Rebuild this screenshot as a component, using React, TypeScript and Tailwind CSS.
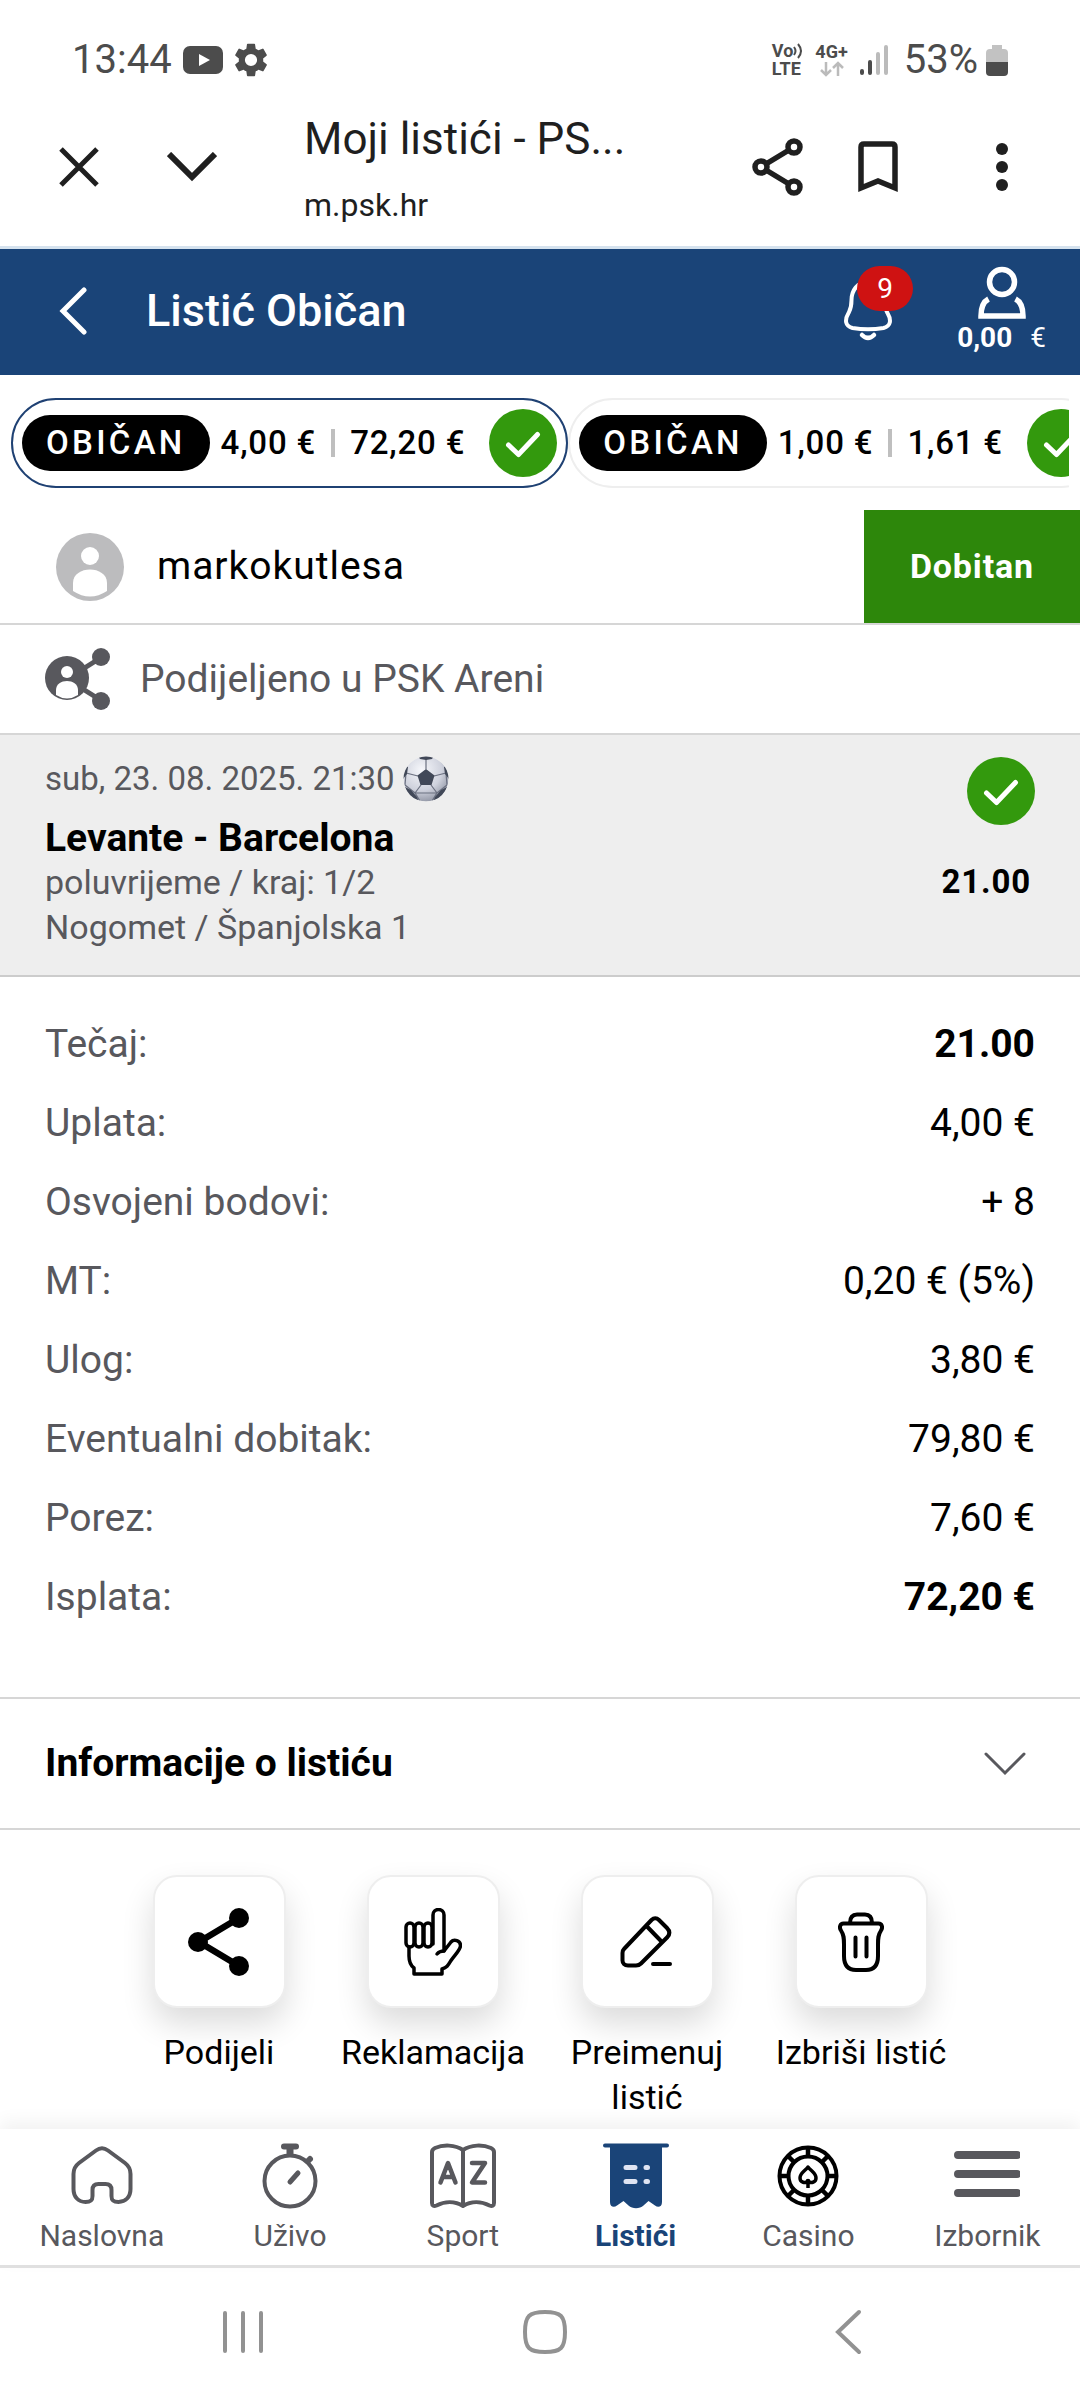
import React from 'react';

type IconProps = { className?: string };

const summary = [
  { label: 'Tečaj:', value: '21.00', bold: true },
  { label: 'Uplata:', value: '4,00 €' },
  { label: 'Osvojeni bodovi:', value: '+ 8' },
  { label: 'MT:', value: '0,20 € (5%)' },
  { label: 'Ulog:', value: '3,80 €' },
  { label: 'Eventualni dobitak:', value: '79,80 €' },
  { label: 'Porez:', value: '7,60 €' },
  { label: 'Isplata:', value: '72,20 €', bold: true },
];

const tickets = [
  { id: 1, stake: '4,00 €', win: '72,20 €', active: true },
  { id: 2, stake: '1,00 €', win: '1,61 €', active: false },
];

const CheckBadge: React.FC<IconProps> = ({ className }) => (
  <svg viewBox="0 0 68 68" className={className} fill="none">
    <circle cx="34" cy="34" r="34" fill="#33990d" />
    <path d="M19.500 36 29.500 45.500 48.500 25.500" stroke="#fff" strokeWidth="5" strokeLinecap="round" strokeLinejoin="round" />
  </svg>
);

const ShareSolid: React.FC<IconProps> = ({ className }) => (
  <svg viewBox="0 0 62 68" className={className} fill="none">
    <path d="M51 10 11 34 51 58" stroke="#000" strokeWidth="6.500" />
    <circle cx="51" cy="10" r="10" fill="#000" />
    <circle cx="10" cy="34" r="10" fill="#000" />
    <circle cx="51" cy="58" r="10" fill="#000" />
  </svg>
);

const HandIcon: React.FC<IconProps> = ({ className }) => (
  <svg viewBox="0 0 58 68" className={className} fill="none" stroke="#000" strokeWidth="3.500" strokeLinejoin="round" strokeLinecap="round">
    <path d="M29 36V7a5 5 0 0 1 11 0v36l7-9c3-3.500 9.500-1.500 9.500 3.500 0 4.500-6 9.500-9.500 15-3 5-4 7-9 8.500v5H10v-6c-4-3-5-7-5-12V39" />
    <rect x="2" y="15" width="8" height="24" rx="4" />
    <rect x="11" y="15" width="8" height="24" rx="4" />
    <rect x="20" y="15" width="8" height="24" rx="4" />
    <path d="M40 43c-3 0-5 .5-7 3" />
  </svg>
);

const PencilIcon: React.FC<IconProps> = ({ className }) => (
  <svg viewBox="0 0 54 54" className={className} fill="none" stroke="#000" strokeWidth="4" strokeLinejoin="round" strokeLinecap="round">
    <path d="M4 34 31.500 5c2.500-2.500 5-2.500 7.500 0l8 8c3 3 3 6 .5 9L21 48.500c-1.500 1.500-3 2-5 2H8c-3.500 0-5.500-2-5.500-5V38c0-1.500.5-3 1.500-4z" />
    <path d="M26.500 11 41 26M33 49h17" />
  </svg>
);

const TrashIcon: React.FC<IconProps> = ({ className }) => (
  <svg viewBox="0 0 46 60" className={className} fill="none" stroke="#000" strokeWidth="4" strokeLinejoin="round" strokeLinecap="round">
    <path d="M5.500 11.500h35c3.500 0 4.500 4 2.500 7-3 4.500-3 8-3 14V44c0 9-4 14-12 14H18C10 58 6 53 6 44V32.500c0-6 0-9.500-3-14-2-3-1-7 2.500-7z" />
    <path d="M12 11C12 5 15 2.500 19 2.500h8c4 0 7 2.500 7 8.500M17.500 25.500v19M28.500 25.500v19" />
  </svg>
);

const HomeIcon: React.FC<IconProps> = ({ className }) => (
  <svg viewBox="0 0 66 66" className={className} fill="none" stroke="currentColor" strokeWidth="4" strokeLinejoin="round">
    <path d="M27 7.500c4-3 8-3 12 0L56 20c4 3 5.500 6.500 5.500 11v15c0 8-5 13-12 13-6 0-7-2-7-6V47c0-4-2-6-6-6h-7c-4 0-6 2-6 6v6c0 4-1 6-7 6-7 0-12-5-12-13V31c0-4.500 1.500-8 5.500-11z" />
  </svg>
);

const StopwatchIcon: React.FC<IconProps> = ({ className }) => (
  <svg viewBox="0 0 66 66" className={className} fill="none" stroke="currentColor" strokeWidth="4" strokeLinecap="round">
    <circle cx="33" cy="38" r="25.500" />
    <path d="M33 39 41 30" strokeWidth="5" />
    <path d="M27 3.500h12" strokeWidth="6" />
    <path d="M33 5v8" strokeWidth="7" strokeLinecap="butt" />
    <path d="M51 18l2-2" strokeWidth="6" />
  </svg>
);

const BookIcon: React.FC<IconProps> = ({ className }) => (
  <svg viewBox="0 0 66 66" className={className} fill="none" stroke="currentColor" strokeWidth="4" strokeLinejoin="round" strokeLinecap="round">
    <path d="M33 7C25 1.500 13 1.500 5 5c-2 1-3 2-3 4v51c0 3 2 3.500 4.500 2.500C15 58 25 58 33 63c8-5 18-5 26.500-.5C62 63.500 64 63 64 60V9c0-2-1-3-3-4-8-3.500-20-3.500-28 2zM33 7v56" />
    <path d="M10.500 39.500 18 20l7.500 19.500M13 34h10M42 20h13L42 39.500h13" strokeWidth="4.500" />
  </svg>
);

const TicketIcon: React.FC<IconProps> = ({ className }) => (
  <svg viewBox="0 0 66 66" className={className} fill="none">
    <path d="M2 2.500h62" stroke="#1a4478" strokeWidth="4" strokeLinecap="round" />
    <path d="M7 3h52v56c0 5-4 6-7 3.500l-6.500-4.500-5 4.500c-4 3.500-11 3.500-15 0l-5-4.500-6.500 4.500C11 65 7 64 7 59z" fill="#1a4478" />
    <path d="M23 24.500h9M43 24.500h1.500M23 38.500h9M43 38.500h1.500" stroke="#dfe4f2" strokeWidth="5" strokeLinecap="round" />
  </svg>
);

const ChipIcon: React.FC<IconProps> = ({ className }) => (
  <svg viewBox="0 0 66 66" className={className} fill="none" stroke="#000">
    <circle cx="33" cy="33" r="28.500" strokeWidth="4" />
    <circle cx="33" cy="33" r="19.500" strokeWidth="4" />
    <path d="M33 4v10M33 52v10M4 33h10M52 33h10M12.500 12.500l7 7M46.500 46.500l7 7M53.500 12.500l-7 7M19.500 46.500l-7 7" strokeWidth="4.500" />
    <path d="M33 24c-3 4-8 6-8 11 0 4.500 5.500 6 8 2.500 2.500 3.500 8 2 8-2.500 0-5-5-7-8-11zM33 36v9" strokeWidth="3.500" strokeLinejoin="round" />
  </svg>
);

const MenuIcon: React.FC<IconProps> = ({ className }) => (
  <svg viewBox="0 0 66 66" className={className} stroke="currentColor" strokeWidth="8" strokeLinecap="round">
    <path d="M4 12h59M4 31h59M4 50h59" />
  </svg>
);

const SoccerBall: React.FC<IconProps> = ({ className }) => (
  <svg viewBox="0 0 46 46" className={className}>
    <defs>
      <radialGradient id="ball" cx="40%" cy="30%" r="75%">
        <stop offset="0" stopColor="#f6f7fb" />
        <stop offset="0.6" stopColor="#cfd2dd" />
        <stop offset="1" stopColor="#8c91a0" />
      </radialGradient>
      <clipPath id="ballEdge">
        <circle cx="23" cy="23" r="22.500" />
      </clipPath>
    </defs>
    <g clipPath="url(#ballEdge)">
      <circle cx="23" cy="23" r="22.500" fill="url(#ball)" />
      <path d="M23 13V3M15 20 3 17M31 20l12-3M18 29 12 37M28 29l6 8M12 37h22M3 17l-1 12 10 8 5 8M43 17l1 12-10 8-5 8" stroke="#6b7080" strokeWidth="1.200" fill="none" />
      <path d="m23 13 8.500 6.500L28.500 29h-11l-3-9.500zM15 0h16l-2 3-6 1-6-1zM0 9l5 2-1 7-4 5zM46 9l-5 2 1 7 4 5zM2 31l6 3 6 7 2 5-10-2zM44 31l-6 3-6 7-2 5 10-2z" fill="#414858" />
    </g>
  </svg>
);

const actions = [
  { label: 'Podijeli', icon: <ShareSolid className="h-[68px]" /> },
  { label: 'Reklamacija', icon: <HandIcon className="h-[68px]" /> },
  { label: 'Preimenuj listić', icon: <PencilIcon className="h-[54px]" /> },
  { label: 'Izbriši listić', icon: <TrashIcon className="h-[60px]" /> },
];

const navItems = [
  { label: 'Naslovna', icon: HomeIcon },
  { label: 'Uživo', icon: StopwatchIcon },
  { label: 'Sport', icon: BookIcon },
  { label: 'Listići', icon: TicketIcon, active: true },
  { label: 'Casino', icon: ChipIcon },
  { label: 'Izbornik', icon: MenuIcon },
];

const StatusBar = () => (
  <div className="flex h-[120px] items-center justify-between px-[72px] text-[40px] text-[#4c4c4c]">
    <div className="flex items-center gap-[11px]">
      <span>13:44</span>
      <svg viewBox="0 0 40 28" className="h-7 w-10">
        <rect width="40" height="28" rx="7" fill="#4c4c4c" />
        <path d="M16 8v12l11-6z" fill="#fff" />
      </svg>
      <svg viewBox="2 2 20 20" className="size-[34px]" fill="#4c4c4c">
        <path d="M19.140 12.940c.04-.3.060-.61.060-.94 0-.32-.02-.64-.07-.94l2.030-1.580a.49.49 0 0 0 .12-.61l-1.920-3.320a.49.49 0 0 0-.59-.22l-2.390.96a7 7 0 0 0-1.620-.94l-.36-2.540a.48.48 0 0 0-.48-.41h-3.840a.48.48 0 0 0-.47.41l-.36 2.540a7 7 0 0 0-1.620.94l-2.390-.96a.48.48 0 0 0-.59.22L2.740 8.870a.48.48 0 0 0 .12.610l2.030 1.580a6 6 0 0 0 0 1.880l-2.030 1.580a.49.49 0 0 0-.12.610l1.920 3.320c.12.220.37.290.59.220l2.390-.96c.5.380 1.030.7 1.620.94l.36 2.540c.05.240.24.410.48.410h3.840c.24 0 .44-.17.470-.41l.36-2.540a7 7 0 0 0 1.620-.94l2.390.96c.22.080.47 0 .59-.22l1.920-3.320a.48.48 0 0 0-.12-.61zM12 15.600a3.600 3.600 0 1 1 0-7.200 3.600 3.600 0 0 1 0 7.200" />
      </svg>
    </div>
    <div className="flex items-center gap-3">
      <div className="text-[18px] font-bold leading-[18px]">
        <div className="flex items-center">
          Vo
          <svg viewBox="0 0 10 16" className="h-4 w-2.5" fill="none" stroke="#4c4c4c" strokeWidth="2">
            <path d="M1 4q3 4 0 8M5 1q6 7 0 14" />
          </svg>
        </div>
        <div>LTE</div>
      </div>
      <div className="flex flex-col items-center text-[18px] font-bold leading-[18px]">
        4G+
        <svg viewBox="0 0 24 16" className="h-4 w-6" fill="none" stroke="#bbb" strokeWidth="2.500">
          <path d="M6 1v13M1 9l5 5 5-5M18 15V2M13 7l5-5 5 5" />
        </svg>
      </div>
      <svg viewBox="0 0 28 30" className="h-[30px] w-7" strokeWidth="4" strokeLinecap="round">
        <path d="M2 26v2M10 17v11" stroke="#4c4c4c" />
        <path d="M18 9v19M26 2v26" stroke="#bbb" />
      </svg>
      <div className="ml-1 flex items-center gap-2">
        <span>53%</span>
        <svg viewBox="0 0 22 32" className="h-8 w-[22px]">
          <path d="M6 1h10v4h2a4 4 0 0 1 4 4v10H0V9a4 4 0 0 1 4-4h2z" fill="#c2c2c2" />
          <path d="M0 18h22v10a4 4 0 0 1-4 4H4a4 4 0 0 1-4-4z" fill="#4c4c4c" />
        </svg>
      </div>
    </div>
  </div>
);

const BrowserBar = () => (
  <div className="flex h-[129px] items-center border-b-[3px] border-[#d5e2ee] pl-[59px] pr-[70px] pb-[32px] text-[#1f1f1f]">
    <button aria-label="Zatvori">
      <svg viewBox="0 0 40 40" className="size-10" stroke="currentColor" strokeWidth="5">
        <path d="m2 2 36 36M38 2 2 38" />
      </svg>
    </button>
    <button aria-label="Proširi" className="ml-[68px]">
      <svg viewBox="0 0 50 30" className="h-[30px] w-[50px]" fill="none" stroke="currentColor" strokeWidth="6">
        <path d="m2 2 23 23L48 2" />
      </svg>
    </button>
    <div className="ml-[87px] min-w-0 flex-1 pt-2">
      <div className="truncate text-[44px] leading-[60px]">Moji listići - PS...</div>
      <div className="pt-2 text-[32px] leading-[56px]">m.psk.hr</div>
    </div>
    <button aria-label="Podijeli stranicu">
      <svg viewBox="0 0 52 58" className="h-[58px] w-[52px]" fill="none" stroke="currentColor">
        <path d="M42 9 9 29l33 20" strokeWidth="5.500" />
        <g fill="#fff" strokeWidth="5.500">
          <circle cx="42" cy="9" r="6" />
          <circle cx="9" cy="29" r="6" />
          <circle cx="42" cy="49" r="6" />
        </g>
      </svg>
    </button>
    <button aria-label="Spremi stranicu" className="ml-[54px]">
      <svg viewBox="0 0 40 52" className="h-[52px] w-10" fill="none" stroke="currentColor" strokeWidth="5.500">
        <path d="M3 47V6q0-3 3-3h28q3 0 3 3v41l-17-7z" />
      </svg>
    </button>
    <button aria-label="Više" className="ml-[96px]">
      <svg viewBox="0 0 16 48" className="h-12 w-4" fill="currentColor">
        <circle cx="8" cy="6" r="6" />
        <circle cx="8" cy="24" r="6" />
        <circle cx="8" cy="42" r="6" />
      </svg>
    </button>
  </div>
);

const AppHeader = () => (
  <header className="flex h-[126px] items-center bg-[#1a4478] pl-[58px] pr-[34px] pb-[2px] text-white">
    <button aria-label="Natrag">
      <svg viewBox="0 0 30 48" className="h-12 w-[30px]" fill="none" stroke="currentColor" strokeWidth="5" strokeLinecap="round">
        <path d="M26 3 5 24l21 21" />
      </svg>
    </button>
    <h1 className="ml-[58px] flex-1 text-[45px] font-medium">Listić Običan</h1>
    <button aria-label="Obavijesti" className="relative mr-11 mb-3.5 h-[76px] w-[69px]">
      <svg viewBox="0 0 48 66" className="absolute bottom-0 left-0 h-[66px] w-12" fill="none" stroke="currentColor" strokeWidth="4" strokeLinecap="round">
        <path d="M24 6C13 6 7.500 15 7.500 24c0 8-1 9-3 13-4 7-3.500 13 4 15 9 1.500 22 1.500 31 0 7.500-2 8-8 4-15-2-4-3-5-3-13C40.500 15 35 6 24 6z" />
        <path d="M18 59q6 6 12 0" strokeWidth="4.500" />
      </svg>
      <span className="absolute right-0 top-0 flex h-[45px] w-14 items-center justify-center rounded-full bg-[#cf1212] text-[28px]">9</span>
    </button>
    <button aria-label="Moj račun" className="flex flex-col items-center">
      <svg viewBox="0 0 50 54" className="h-[54px] w-[50px]" fill="none" stroke="currentColor" strokeWidth="5.500">
        <circle cx="25" cy="16" r="12.500" />
        <path d="M11.500 33Q4 37 4 50h42q0-13-7.500-17" />
      </svg>
      <span className="flex gap-[18px] text-[28px] leading-[36px]">
        <b>0,00</b>
        <span>€</span>
      </span>
    </button>
  </header>
);

const TicketTabs = () => (
  <div className="mx-[11px] mt-[23px] flex overflow-hidden">
    {tickets.map((t) => (
      <button
        key={t.id}
        className={`flex h-[90px] shrink-0 items-center rounded-full border-2 px-[9px] text-[33px] font-medium tracking-wide ${
          t.active ? 'border-[#1f4173]' : 'border-[#eee]'
        }`}
      >
        <span className="rounded-full bg-black px-6 leading-[56px] tracking-widest text-white">OBIČAN</span>
        <span className="ml-[11px]">{t.stake}</span>
        <span className="mx-[15px] h-7 w-1 bg-[#bfbfbf]" />
        <span>{t.win}</span>
        <CheckBadge className="ml-6 size-[68px]" />
      </button>
    ))}
  </div>
);

export default function App() {
  return (
    <div className="flex min-h-screen flex-col bg-white font-['Roboto',sans-serif] text-black">
      <StatusBar />
      <BrowserBar />
      <AppHeader />

      <main className="flex-1">
        <TicketTabs />

        {/* vlasnik listića */}
        <div className="mt-[22px] flex h-[115px] items-stretch border-b-2 border-[#d6d6d6]">
          <div className="flex flex-1 items-center gap-[33px] pl-14 text-[39px] tracking-wide">
            <svg viewBox="0 0 68 68" className="size-[68px]">
              <circle cx="34" cy="34" r="34" fill="#bcbcbe" />
              <circle cx="34" cy="23" r="9" fill="#fff" />
              <path d="M17 58V50c0-18 34-18 34 0v8q-17 11-34 0z" fill="#fff" />
            </svg>
            markokutlesa
          </div>
          <div className="flex items-center bg-[#2d870b] px-[46px] text-[34px] font-bold tracking-wide text-white">Dobitan</div>
        </div>

        <div className="flex h-[110px] items-center gap-[29px] border-b-2 border-[#d6d6d6] pl-[45px] text-[39px] text-[#58585d]">
          <svg viewBox="0 0 66 62" className="h-[62px] w-[66px]">
            <path d="M57 9 22 31l35 22" stroke="#58585d" strokeWidth="5" fill="none" />
            <circle cx="56" cy="9" r="9" fill="#58585d" />
            <circle cx="56" cy="53" r="9" fill="#58585d" />
            <circle cx="22" cy="30" r="22" fill="#58585d" />
            <circle cx="22" cy="24" r="6" fill="#fff" />
            <path d="M11 47v-5c0-12 22-12 22 0v5q-11 7-22 0z" fill="#fff" />
          </svg>
          Podijeljeno u PSK Areni
        </div>

        <section className="flex justify-between border-b-2 border-[#ccc] bg-[#eee] px-[45px] pt-[20px] pb-[23px]">
          <div className="text-[34px] leading-[48px] text-[#58585d]">
            <div className="flex items-center gap-2 text-[33px]">
              sub, 23. 08. 2025. 21:30
              <SoccerBall className="size-[46px]" />
            </div>
            <h2 className="pt-[11px] text-[39px] font-bold text-black">Levante - Barcelona</h2>
            <p className="leading-[40px]">poluvrijeme / kraj: 1/2</p>
            <p className="leading-[50px]">Nogomet / Španjolska 1</p>
          </div>
          <div className="flex flex-col items-end pt-[2px]">
            <CheckBadge className="size-[68px]" />
            <span className="mt-8 pr-1 text-[33px] font-bold tracking-wide">21.00</span>
          </div>
        </section>

        <dl className="px-[45px] pt-[28px] pb-[60px] text-[39px] leading-[79px]">
          {summary.map((row) => (
            <div key={row.label} className="flex justify-between">
              <dt className="text-[#58585d]">{row.label}</dt>
              <dd className={row.bold ? 'font-bold' : ''}>{row.value}</dd>
            </div>
          ))}
        </dl>

        <button className="flex h-[133px] w-full items-center justify-between border-y-2 border-[#d6d6d6] pl-[45px] pr-[54px] text-[39px] font-bold">
          Informacije o listiću
          <svg viewBox="0 0 42 24" className="h-6 w-[42px]" fill="none" stroke="#58585d" strokeWidth="3" strokeLinecap="round">
            <path d="m2 2 19 19L40 2" />
          </svg>
        </button>

        <div className="flex justify-center pt-[45px]">
          {actions.map((a) => (
            <button key={a.label} className="flex w-[214px] flex-col items-center text-[34px] leading-[45px]">
              <span className="mb-[22px] flex size-[133px] items-center justify-center rounded-3xl border-2 border-[#eee] bg-white shadow-[0_16px_32px_rgba(0,0,0,0.14)]">
                {a.icon}
              </span>
              <span className="px-5">{a.label}</span>
            </button>
          ))}
        </div>
      </main>

      <nav className="flex h-[139px] border-b-[3px] border-[#e0e0e0] bg-white pt-[14px] shadow-[0_-8px_16px_rgba(0,0,0,0.05)]">
        {navItems.map(({ label, icon: Icon, active }) => (
          <a
            key={label}
            href="#"
            className={`flex min-w-[16%] flex-auto flex-col items-center gap-[7px] px-10 text-[30px] leading-[40px] ${
              active ? 'font-bold text-[#1a4478]' : 'text-[#58585d]'
            }`}
          >
            <Icon className="size-[66px]" />
            {label}
          </a>
        ))}
      </nav>

      <div className="flex h-[132px] items-center justify-between px-[218px] pb-1 text-[#929292]">
        <button aria-label="Nedavne aplikacije">
          <svg viewBox="-4 0 46 44" className="h-11 w-[46px]" stroke="currentColor" strokeWidth="4" strokeLinecap="round">
            <path d="M3 3v38M21 3v38M39 3v38" />
          </svg>
        </button>
        <button aria-label="Početni zaslon">
          <svg viewBox="0 0 46 46" className="size-[46px]" fill="none" stroke="currentColor" strokeWidth="4">
            <path d="M23 3c16 0 20 4 20 20s-4 20-20 20S3 39 3 23 7 3 23 3z" />
          </svg>
        </button>
        <button aria-label="Natrag u pregledniku">
          <svg viewBox="-8 0 36 46" className="h-[46px] w-9" fill="none" stroke="currentColor" strokeWidth="4" strokeLinecap="round">
            <path d="M25 3 4 23l21 20" />
          </svg>
        </button>
      </div>
    </div>
  );
}
